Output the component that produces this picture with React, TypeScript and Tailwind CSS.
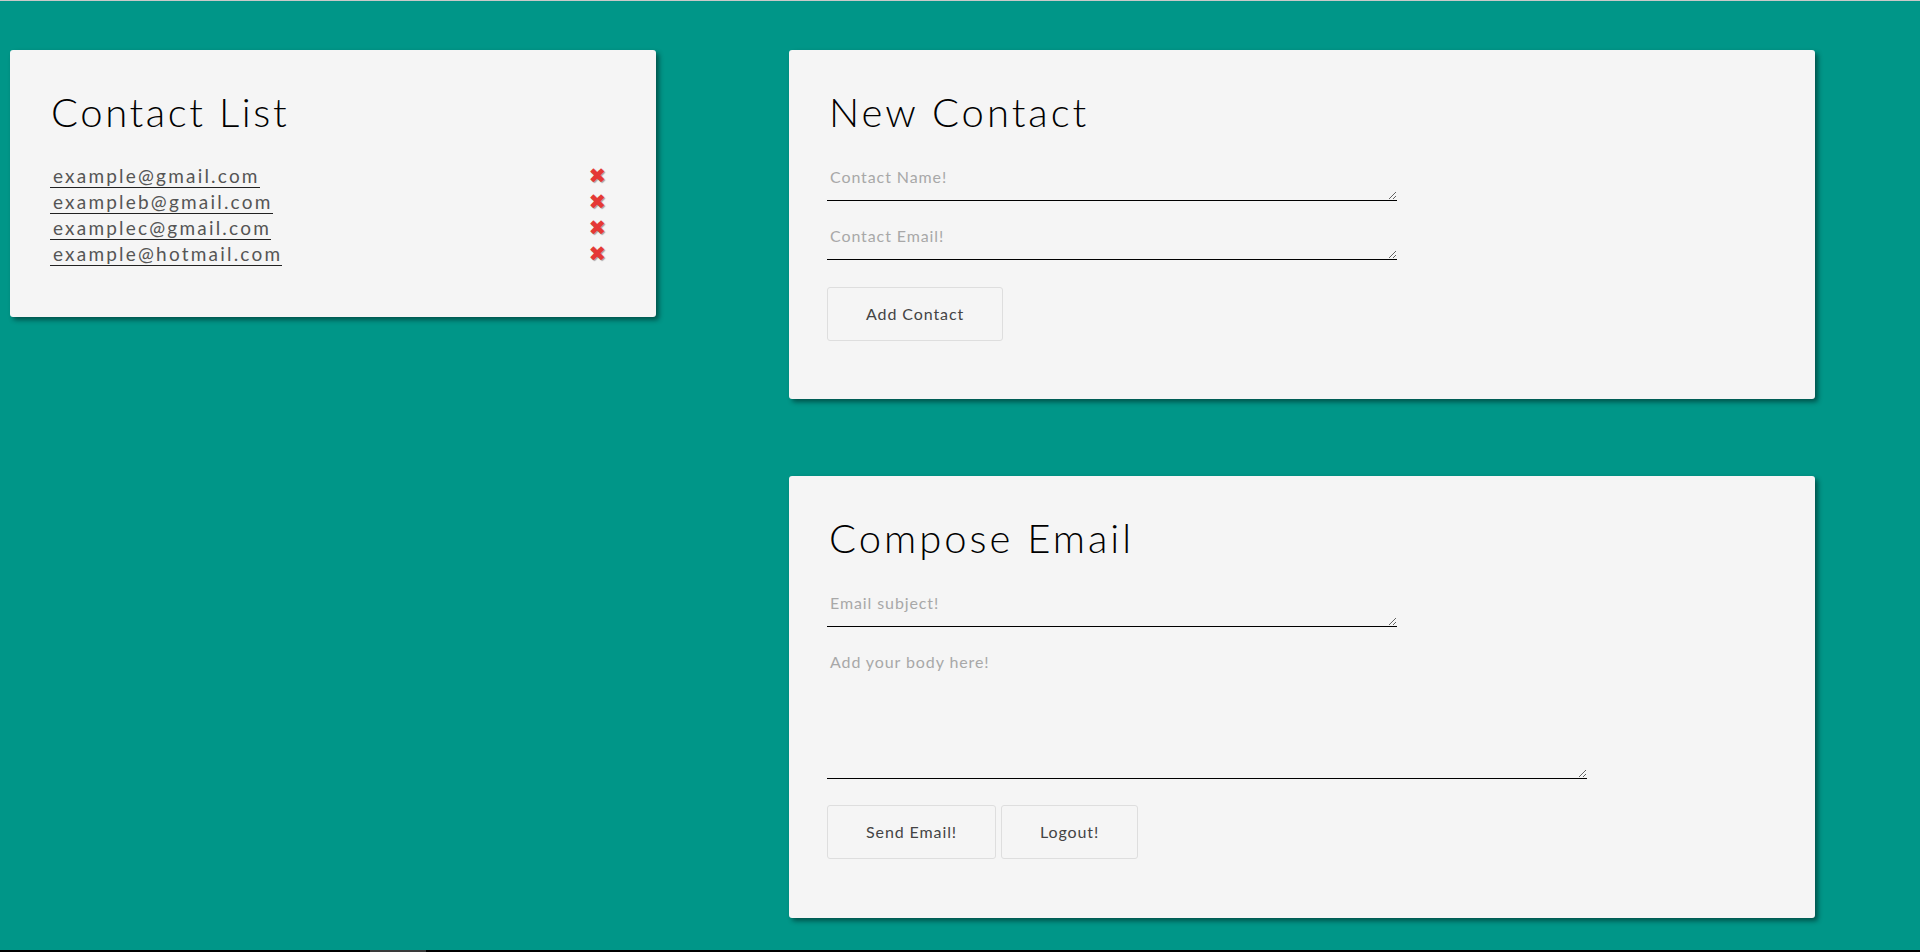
import React from "react";

const contacts = [
  "example@gmail.com",
  "exampleb@gmail.com",
  "examplec@gmail.com",
  "example@hotmail.com",
];

const font = { fontFamily: "Lato, 'Open Sans', sans-serif" };

function Card({ children, className = "" }: { children: React.ReactNode; className?: string }) {
  return (
    <div
      className={
        "bg-[#f5f5f5] rounded-[3px] shadow-[3px_3px_5px_rgba(0,0,0,0.45)] " +
        className
      }
    >
      {children}
    </div>
  );
}

function Title({ text, wide }: { text: string; wide?: boolean }) {
  return (
    <h1
      className={
        "text-[40px] leading-[48px] font-light text-black " +
        (wide ? "tracking-[3px]" : "tracking-[2.6px]")
      }
    >
      {text}
    </h1>
  );
}

function Field({ placeholder, tall }: { placeholder: string; tall?: boolean }) {
  return (
    <textarea
      placeholder={placeholder}
      className={
        "block bg-transparent border-0 border-b border-black outline-none pl-[3px] pt-[5px] text-[16px] leading-[20px] tracking-[0.9px] text-[#333] placeholder:text-[#a8a8a8] " +
        (tall ? "w-[760px] h-[132px]" : "w-[570px] h-[39px]")
      }
      style={font}
    />
  );
}

function Button({ label }: { label: string }) {
  return (
    <button className="h-[54px] px-[38px] border border-[#dedede] rounded-[3px] bg-[#f5f5f5] text-[16px] tracking-[0.9px] text-[#444]">
      {label}
    </button>
  );
}

export default function App() {
  return (
    <div className="w-[1920px] h-[952px] flex flex-col overflow-hidden" style={font}>
      <div className="h-px bg-[#c9c9c9]" />
      <div className="flex-1 bg-[#009688] flex items-start pl-[10px] pt-[49px] gap-[133px]">
        <Card className="w-[646px] pl-[40px] pr-[50px] pt-[38px] pb-[48px]">
          <div className="pl-[1px]">
            <Title text="Contact List" />
          </div>
          <ul className="mt-[29px]">
            {contacts.map((c) => (
              <li key={c} className="flex justify-between items-start h-[26px]">
                <a className="inline-block pl-[3px] border-b border-[#222] text-[19px] leading-[22px] tracking-[2.2px] text-[#555]">
                  {c}
                </a>
                <span
                  className="text-[21px] leading-[22px] text-[#e53935] [text-shadow:1px_1px_1px_rgba(0,0,0,0.35)]"
                  style={{ fontFamily: "'DejaVu Sans', sans-serif" }}
                >
                  ✖
                </span>
              </li>
            ))}
          </ul>
        </Card>
        <div className="flex flex-col gap-[77px]">
          <Card className="w-[1026px] pl-[38px] pt-[38px] pb-[58px]">
            <div className="pl-[2px]">
              <Title text="New Contact" wide />
            </div>
            <div className="mt-[26px] flex flex-col gap-[20px]">
              <Field placeholder="Contact Name!" />
              <Field placeholder="Contact Email!" />
            </div>
            <div className="mt-[27px] flex gap-[5px]">
              <Button label="Add Contact" />
            </div>
          </Card>
          <Card className="w-[1026px] pl-[38px] pt-[38px] pb-[59px]">
            <div className="pl-[2px]">
              <Title text="Compose Email" wide />
            </div>
            <div className="mt-[26px] flex flex-col gap-[20px]">
              <Field placeholder="Email subject!" />
              <Field placeholder="Add your body here!" tall />
            </div>
            <div className="mt-[26px] flex gap-[5px]">
              <Button label="Send Email!" />
              <Button label="Logout!" />
            </div>
          </Card>
        </div>
      </div>
      <div className="h-[2px] bg-black flex">
        <div className="ml-[370px] w-[56px] bg-[#3a3a3a]" />
      </div>
    </div>
  );
}
